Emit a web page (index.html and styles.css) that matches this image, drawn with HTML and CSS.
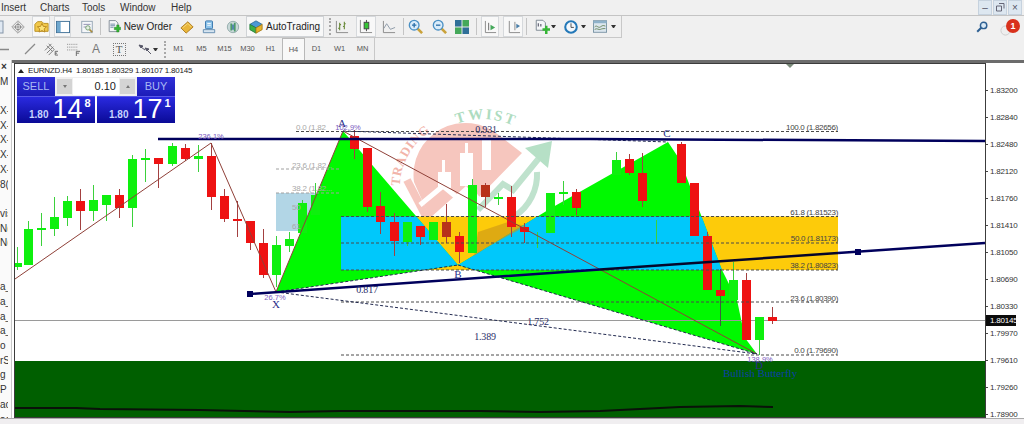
FILE: index.html
```html
<!DOCTYPE html>
<html lang="en">
<head>
<meta charset="utf-8">
<title>EURNZD.H4</title>
<link rel="stylesheet" href="styles.css">
</head>
<body>
<div class="app">
  <div class="menu">
    <span class="menu-item m-insert">Insert</span>
    <span class="menu-item m-charts">Charts</span>
    <span class="menu-item m-tools">Tools</span>
    <span class="menu-item m-window">Window</span>
    <span class="menu-item m-help">Help</span>
    <span class="win-btns">
      <span class="win-btn">–</span>
      <span class="win-btn">
        <svg width="9" height="9" viewBox="0 0 9 9"><path d="M3 .5h5v5M.5 3h5v5h-5z" fill="none" stroke="#667"/></svg>
      </span>
      <span class="win-btn close">×</span>
    </span>
  </div>

  <div class="toolbar">
    <div class="tools">
      <span class="tool w5"><svg width="5" height="16" viewBox="0 0 5 16"><rect x="-6" y="2" width="9" height="12" fill="#dfe8f2" stroke="#8495a8"/></svg></span>
      <span class="tool w25"><svg width="14" height="14" viewBox="0 0 18 18"><path d="M9 1l8 8-8 8-8-8z" fill="#eee" stroke="#8a8a8a"/><circle cx="9" cy="9" r="3.500" fill="#fff" stroke="#777"/><path d="M9 3v12M3 9h12" stroke="#777"/></svg></span>
      <span class="tool sel w18 ml2"><svg width="15" height="15" viewBox="0 0 17 17"><path d="M1 6l3-3h5l2 2h5v9H1z" fill="#f1c84a" stroke="#b58b1c"/><path d="M9 5l1.600 3.400 3.600.4-2.700 2.400.8 3.600L9 13l-3.300 1.800.8-3.600L3.800 8.800l3.600-.4z" fill="#fbe27a" stroke="#b5841c"/></svg></span>
      <span class="tool sel w17 ml4"><svg width="14" height="14" viewBox="0 0 15 15"><rect x=".5" y="1.500" width="14" height="12" fill="#fff" stroke="#3e6f96"/><rect x="1" y="2" width="4" height="11" fill="#6fa8cf"/></svg></span>
      <span class="tool w22 ml5"><svg width="14" height="14" viewBox="0 0 16 16"><rect x="2" y="1.500" width="12" height="13" fill="#f5f7fa" stroke="#8ea0b0"/><path d="M4 5h8M4 8h4" stroke="#88a"/><circle cx="9" cy="9" r="2.500" fill="#e6f0e0" stroke="#6c9a6c"/><path d="M11 11l3 3" stroke="#a88a3c" stroke-width="2"/></svg></span>
      <span class="sep ml2"></span>
      <span class="tool order ml7"><svg width="13" height="15" viewBox="0 0 16 18"><path d="M1.500 1.500h8l3 3v11h-11z" fill="#f4f6f8" stroke="#6d7a86"/><path d="M3 6h6M3 8h6M3 10h4" stroke="#5a7a9a"/><path d="M8 10h3V7h3v3h2v3h-2v3h-3v-3H8z" fill="#35b535" stroke="#1b7a1b" stroke-width=".5"/></svg><span class="tool-text">New Order</span></span>
      <span class="tool w22 ml4"><svg width="14" height="14" viewBox="0 0 16 16"><path d="M1 9l8-7 6 6-8 7z" fill="#e8b53a" stroke="#a9761a"/><path d="M3 9l6-5 4 4" fill="none" stroke="#f8dd80"/></svg></span>
      <span class="tool w21"><svg width="14" height="14" viewBox="0 0 16 16"><rect x="4" y="1" width="8" height="9" rx="1" fill="#8ec4ea" stroke="#2f6fa8"/><path d="M6 4h4M6 6h4" stroke="#fff"/><path d="M1.500 11h13v3.500h-13z" fill="#d6e4f0" stroke="#5c88ad"/></svg></span>
      <span class="tool w22 ml3"><svg width="14" height="14" viewBox="0 0 16 16"><circle cx="8" cy="8" r="6.500" fill="#c8d8d8" stroke="#8fa8a8"/><path d="M6 4v8M10 3v10" stroke="#4c9a6a" stroke-width="2"/><path d="M8 5v6" stroke="#4a7ea8" stroke-width="2"/></svg></span>
      <span class="auto ml2"><svg width="14" height="14" viewBox="0 0 16 16"><path d="M1 5l7-4 7 4-7 4z" fill="#4c98d6" stroke="#286a9c"/><path d="M1 5v6l7 4V9z" fill="#3bb04a" stroke="#27803a"/><path d="M15 5v6l-7 4V9z" fill="#e7b42c" stroke="#a87c18"/></svg><span class="tool-text">AutoTrading</span></span>
      <span class="grip ml5"></span>
      <span class="tool w18 ml2"><svg width="14" height="14" viewBox="0 0 15 15"><path d="M1.500 1v12.500H14" fill="none" stroke="#888"/><path d="M5 3v8M3.500 9H5M5 5h1.500M10 2v8M8.500 7H10M10 4h1.500" fill="none" stroke="#6a8a3a" stroke-width="1.200"/></svg></span>
      <span class="tool sel w20 ml5"><svg width="14" height="15" viewBox="0 0 15 16"><path d="M1.500 1v13.500H14" fill="none" stroke="#888"/><path d="M8 1v12" stroke="#444"/><rect x="5.500" y="3.500" width="5" height="7" fill="#35c535" stroke="#444"/></svg></span>
      <span class="tool w20 ml3"><svg width="14" height="14" viewBox="0 0 15 15"><path d="M1.500 1v12.500H14" fill="none" stroke="#888"/><path d="M2 9l3-5 4 6 5-2" fill="none" stroke="#8a98a6"/></svg></span>
      <span class="sep ml4"></span>
      <span class="tool w20 ml1"><svg width="15" height="15" viewBox="0 0 17 17"><path d="M10 10l6 6" stroke="#caa23a" stroke-width="3"/><circle cx="7" cy="7" r="5.500" fill="#d9ecfa" stroke="#4a90c4" stroke-width="1.500"/><path d="M4.500 7h5M7 4.500v5" stroke="#2a6fa8" stroke-width="1.500"/></svg></span>
      <span class="tool w20 ml4"><svg width="15" height="15" viewBox="0 0 17 17"><path d="M10 10l6 6" stroke="#caa23a" stroke-width="3"/><circle cx="7" cy="7" r="5.500" fill="#d9ecfa" stroke="#4a90c4" stroke-width="1.500"/><path d="M4.500 7h5" stroke="#2a6fa8" stroke-width="1.500"/></svg></span>
      <span class="tool w20 ml3"><svg width="14" height="14" viewBox="0 0 15 15"><rect x="0" y="0" width="7" height="7" fill="#2f6f98"/><rect x="8" y="0" width="7" height="7" fill="#45a85a"/><rect x="0" y="8" width="7" height="7" fill="#45a85a"/><rect x="8" y="8" width="7" height="7" fill="#2f6f98"/></svg></span>
      <span class="sep ml4"></span>
      <span class="tool sel w18 ml4"><svg width="13" height="14" viewBox="0 0 14 15"><path d="M1.500 1v12.500H13" fill="none" stroke="#888"/><path d="M5 3v8" stroke="#666"/><path d="M7 5l5 3-5 3z" fill="#45a85a"/></svg></span>
      <span class="tool sel w20 ml4"><svg width="15" height="14" viewBox="0 0 16 15"><path d="M3.500 1v12.500H15M9.500 2v9" fill="none" stroke="#888"/><path d="M11 4l4 2.500L11 9z" fill="#4a7ea8"/></svg></span>
      <span class="sep ml3"></span>
      <span class="tool w18 ml6"><svg width="15" height="15" viewBox="0 0 18 18"><path d="M1.500 1.500h8l3 3v9h-11z" fill="#f4f6f8" stroke="#6d7a86"/><path d="M4 9V5M7 9V6" stroke="#667" stroke-width="1.500"/><path d="M9 11h3V8h3v3h3v3h-3v4h-3v-4H9z" fill="#35b535"/></svg></span>
      <span class="caret"></span>
      <span class="tool w18 ml6"><svg width="14" height="14" viewBox="0 0 17 17"><circle cx="8.500" cy="8.500" r="7" fill="#f4f8fc" stroke="#2378b8" stroke-width="2.500"/><path d="M8.500 4v5H12" fill="none" stroke="#333"/></svg></span>
      <span class="caret ml1"></span>
      <span class="tool w18 ml5"><svg width="14" height="13" viewBox="0 0 17 15"><rect x=".5" y=".5" width="16" height="14" fill="#dbe6ee" stroke="#6d8a9c"/><rect x=".5" y=".5" width="16" height="3" fill="#8fb2ca"/><path d="M2 8c3-3 4 2 7 0s3-2 6-1M2 11c3-2 5 1 7 0s4-1 6-1" fill="none" stroke="#5a7a4a"/></svg></span>
      <span class="caret ml2"></span>
    </div>
    <div class="tools-right">
      <svg width="12" height="12" viewBox="0 0 15 15"><circle cx="9.500" cy="5.500" r="4" fill="#d8e8f5" stroke="#2d5f92" stroke-width="1.800"/><path d="M6.500 8.500L1.500 13.500" stroke="#2d5f92" stroke-width="2.500"/></svg>
      <span class="alert"><svg class="bubble" width="11" height="11" viewBox="0 0 12 12"><circle cx="6" cy="6" r="5" fill="#eee" stroke="#ccc"/></svg><span class="badge">1</span></span>
    </div>
  </div>

  <div class="toolbar tb2">
    <div class="tools">
      <span class="tool w9"><svg width="9" height="3" viewBox="0 0 9 3"><path d="M0 1.500h9" stroke="#888" stroke-width="1.500"/></svg></span>
      <span class="tool w14 ml14"><svg width="12" height="12" viewBox="0 0 12 12"><path d="M1 11L11 1" stroke="#8a8a8a" stroke-width="1.200"/></svg></span>
      <span class="tool w16 ml6"><svg width="14" height="14" viewBox="0 0 15 15"><path d="M1 9l7-7M3 12l7-7M5 14l6-6M3 4l6 6M5 2l6 6" stroke="#777"/><path d="M12 10h3M12 12h2M12 14h3M12 10v4" stroke="#666"/></svg></span>
      <span class="tool w16 ml7"><svg width="14" height="14" viewBox="0 0 15 15"><path d="M0 2.500h12M0 5.500h12M0 8.500h12" stroke="#888" stroke-dasharray="1 1"/><path d="M10 10h4M10 10v5M10 12h3" stroke="#666"/></svg></span>
      <span class="tool w14 ml7 glyph-a">A</span>
      <span class="tool w16 ml8"><span class="glyph-t">T</span></span>
      <span class="tool w16 ml10"><svg width="14" height="12" viewBox="0 0 14 12"><path d="M1 2l4 1-2 2zM7 5l4 1-2 2zM3 4l4 3M10 8l3 3" fill="#556" stroke="#556"/></svg></span>
      <span class="caret"></span>
      <span class="grip ml6"></span>
      <span class="periods">
        <span class="period">M1</span><span class="period">M5</span><span class="period">M15</span><span class="period">M30</span><span class="period">H1</span><span class="period active">H4</span><span class="period">D1</span><span class="period">W1</span><span class="period">MN</span>
      </span>
    </div>
  </div>

  <div class="main">
    <div class="side">
      <div class="side-row close-x">×</div><div class="side-row">M</div><div class="side-row"></div>
      <div class="side-row">X-</div><div class="side-row">X-</div><div class="side-row">X-</div><div class="side-row">X-</div><div class="side-row">X-</div><div class="side-row">8(</div><div class="side-row"></div>
      <div class="side-row">vis</div><div class="side-row">N(</div><div class="side-row">N(</div><div class="side-row"></div><div class="side-row"></div>
      <div class="side-row">a_</div><div class="side-row">a_</div><div class="side-row">a_</div><div class="side-row">a_</div>
      <div class="side-row">o S</div><div class="side-row">rS</div><div class="side-row">g</div><div class="side-row">P</div><div class="side-row">ac</div><div class="side-row">ac</div>
    </div>
    <div class="chart">
      <svg class="plot" width="970" height="353" viewBox="15 64 970 353">
        <defs>
          <clipPath id="zone"><rect x="341" y="216.500" width="497" height="53.500"/></clipPath>
          <path id="arc-red" d="M400 186A66 66 0 0 1 456 122"/>
          <path id="arc-green" d="M457 124C475 117 497 117 518 128"/>
        </defs>

        <g class="mark">
          <path class="mark-red-line" d="M407 180L430 224"/>
          <path class="mark-red" d="M414 182A52 52 0 0 1 500 136L522 153 478 198 466 186 430 218z"/>
          <path class="mark-cut" d="M442 160h3v12h6v16h-13v-16h4zM465 143h3v10h5v33h-13v-33h5zM482 140h9v30h-9z"/>
          <path class="mark-cut-line" d="M420 205L443 186 466 205 478 195"/>
          <path class="mark-green-line" d="M537 172A50 50 0 0 1 515 216"/>
          <path class="mark-green-line arrow" d="M478 210L503 184 513 190 544 152"/>
          <path class="mark-green" d="M552 141L548 168 525 148z"/>
          <text class="mark-text-red"><textPath href="#arc-red">TRADING</textPath></text>
          <text class="mark-text-green"><textPath href="#arc-green">TWIST</textPath></text>
        </g>

        <rect class="zone-old" x="276" y="193" width="65" height="38"/>
        <rect class="zone" x="341" y="216.500" width="497" height="53.500"/>

        <path class="wing" d="M276 292L343 131 458 265zM458 265L553 207 668 142 680 160 722 270 737 300 745 338 757 354z"/>
        <path class="wing-x" clip-path="url(#zone)" d="M276 292L343 131 458 265zM458 265L553 207 668 142 680 160 722 270 737 300 745 338 757 354z"/>
        <path class="zone-tint" d="M478 232l30-10 18 4-40 22-12 8z"/>

        <path class="band" d="M14 361h971v56H14z"/>
        <path class="curve" d="M15 408l61 0 24 1 100 1 44 1 46 1 50-1 140 0 60 1 60-1 80-4 60-1 33 1"/>
        <path class="price" d="M15 320.500h970"/>

        <path class="wick-g" d="M17.500 247v23M28.500 221v44M41.500 213v33M54.500 197v39M67.500 196v30M93.500 185v36M106.500 195v26M132.500 155v72M145.500 149v33M172.500 143v23M198.500 145v27M276.500 236v51M289.500 232v20M302.500 200v20M315.500 183v20M407.500 222v24M472.500 179v74M498.500 193v12M537.500 232v16M563.500 181v24M616.500 152v23M656.500 220v24M733.500 262v38M759.500 317v38"/>
        <path class="body-g" d="M15 263h7v4h-7zM24 229h9v36h-9zM37 228h9v2h-9zM50 217h9v12h-9zM63 201h9v17h-9zM89 200h9v11h-9zM102 195h9v10h-9zM128 159h9v49h-9zM141 158h9v2h-9zM168 146h9v18h-9zM194 156h9v3h-9zM272 245h9v30h-9zM285 239h9v7h-9zM298 203h9v30h-9zM311 195h9v20h-9zM403 222h9v20h-9zM429 222h9v18h-9zM468 185h9v68h-9zM494 197h9v2h-9zM546 193h9v40h-9zM559 192h9v2h-9zM612 160h9v15h-9zM729 280h9v20h-9zM755 317h9v23h-9z"/>
        <path class="wick-r" d="M80.500 189v41M119.500 189v29M158.500 158v30M185.500 144v17M211.500 143v67M224.500 189v33M237.500 201v36M250.500 221v29M263.500 229v49M354.500 130v29M367.500 148v64M380.500 192v42M394.500 213v43M420.500 226v19M446.500 204v39M459.500 232v31M485.500 183v24M511.500 186v51M524.500 223v20M576.500 189v26M629.500 154v21M642.500 153v54M681.500 142v41M694.500 183v53M707.500 232v58M746.500 273v67M772.500 307v17"/>
        <path class="wick-dark" d="M720.500 269v57"/>
        <path class="body-r" d="M76 201h9v10h-9zM115 195h9v13h-9zM154 158h9v6h-9zM181 148h9v11h-9zM207 156h9v41h-9zM220 196h9v23h-9zM233 219h9v2h-9zM246 221h9v22h-9zM259 243h9v32h-9zM350 136h9v13h-9zM363 148h9v59h-9zM376 206h9v16h-9zM390 222h9v19h-9zM416 226h9v11h-9zM455 236h9v16h-9zM507 197h9v30h-9zM520 227h9v5h-9zM572 192h9v16h-9zM625 159h9v14h-9zM638 173h9v28h-9zM677 144h9v39h-9zM690 183h9v53h-9zM703 236h9v54h-9zM716 290h9v6h-9zM742 280h9v60h-9zM768 317h9v4h-9z"/>
        <path class="body-dr" d="M442 222h9v15h-9zM481 185h9v12h-9z"/>

        <path class="zig" d="M15 279L211 143 276 292 343 131 757 354"/>
        <path class="fib" d="M296 131.500h542M341 216.500h497M341 243h497M341 270h497M341 302h497M341 355h497"/>
        <path class="fib-faint" d="M276 169h65M276 193h65"/>
        <path class="pat" d="M343 131L668 142M276 292L458 265M458 265L757 354M276 292L757 354"/>
        <path class="trend" d="M158 139L590 139 985 141M250 294L600 269.500"/>
        <path class="trend-dark" d="M600 269.500L838 253"/>
        <path class="trend" d="M838 253L985 243"/>
        <rect class="handle" x="247" y="291" width="6" height="6"/>
        <rect class="handle" x="855" y="249" width="6" height="6"/>
        <path class="marker" d="M786 64h8l-4 4z"/>

        <g class="fib-labels">
          <text x="838" y="130">100.0 (1.82656)</text>
          <text x="838" y="215">61.8 (1.81523)</text>
          <text x="838" y="241">50.0 (1.81173)</text>
          <text x="838" y="268">38.2 (1.80823)</text>
          <text x="838" y="301">23.6 (1.80390)</text>
          <text x="838" y="353">0.0 (1.79690)</text>
        </g>
        <g class="faint-labels">
          <text x="296" y="130">0.0 (1.82</text>
          <text x="292" y="168">23.6 (1.82...</text>
          <text x="292" y="191">38.2 (1.82...</text>
          <text x="292" y="210">50</text>
          <text x="292" y="229">61</text>
        </g>
        <g class="pct">
          <text x="211" y="139">236.1%</text>
          <text x="348" y="130">102.9%</text>
          <text x="275" y="300">26.7%</text>
          <text x="760" y="362">138.9%</text>
        </g>
        <g class="ratio">
          <text x="486" y="133">0.931</text>
          <text x="367" y="293">0.817</text>
          <text x="538" y="325">1.752</text>
          <text x="485" y="340">1.389</text>
        </g>
        <g class="point">
          <text x="276" y="308">X</text>
          <text x="342" y="127">A</text>
          <text x="458" y="278">B</text>
          <text x="667" y="137">C</text>
          <text x="759" y="369">D</text>
        </g>
        <text class="pattern-name" x="760" y="377">Bullish Butterfly</text>
      </svg>

      <div class="chart-title"><span class="tri"></span>EURNZD.H4&nbsp; 1.80185 1.80329 1.80107 1.80145</div>

      <div class="trade">
        <div class="trade-top">
          <div class="trade-label">SELL</div>
          <div class="lot">
            <span class="lot-btn"><span class="arr-d"></span></span>
            <span class="lot-val">0.10</span>
            <span class="lot-btn"><span class="arr-u"></span></span>
          </div>
          <div class="trade-label">BUY</div>
        </div>
        <div class="trade-bottom">
          <div class="quote"><span class="q-small">1.80</span><span class="q-big">14</span><span class="q-sup">8</span></div>
          <div class="quote"><span class="q-small">1.80</span><span class="q-big">17</span><span class="q-sup">1</span></div>
        </div>
      </div>
    </div>
    <div class="axis">
      <div class="tick">1.83200</div><div class="tick">1.82840</div><div class="tick">1.82480</div><div class="tick">1.82120</div><div class="tick">1.81760</div><div class="tick">1.81410</div><div class="tick">1.81050</div><div class="tick">1.80690</div><div class="tick">1.80330</div><div class="tick">1.79970</div><div class="tick">1.79610</div><div class="tick">1.79260</div><div class="tick">1.78900</div>
      <div class="tag">1.80145</div>
    </div>
  </div>
  <div class="status"></div>
</div>
</body>
</html>
```
FILE: styles.css
```css
* { box-sizing: border-box; }
html, body { margin: 0; padding: 0; background: #f0f0f0; }
body { font-family: "Liberation Sans", sans-serif; color: #222; }
svg { display: block; }

.app { width: 1024px; height: 424px; overflow: hidden; display: flex; flex-direction: column; background: #f0f0f0; }

/* menu */
.menu { height: 16px; flex: none; display: flex; align-items: center; font-size: 10px; color: #333; border-bottom: 1px solid #c4c4c4; }
.menu-item { display: block; }
.m-insert { width: 40px; padding-left: 1px; }
.m-charts { width: 42px; }
.m-tools { width: 38px; }
.m-window { width: 51px; }
.win-btns { margin-left: auto; margin-right: 2px; height: 15px; display: flex; gap: 1px; }
.win-btn { width: 14px; height: 15px; background: #dde7f0; border: 1px solid #c6d2de; color: #556; font-size: 10px; line-height: 13px; display: flex; align-items: center; justify-content: center; }

/* toolbars */
.toolbar { height: 22px; flex: none; display: flex; align-items: center; justify-content: space-between; }
.tools { display: flex; align-items: center; height: 22px; width: 622px; border-right: 1px solid #c8c8c8; border-bottom: 1px solid #c8c8c8; }
.tb2 .tools { width: 375px; border-bottom: 0; }
.tool { display: flex; align-items: center; justify-content: center; height: 21px; flex: none; }
.sel { background: #f8f8f8; border: 1px solid #d6d9dc; }
.order { justify-content: flex-start; width: 64px; gap: 3px; }
.tool-text { font-size: 10px; color: #222; white-space: nowrap; }
.auto { width: 78px; height: 21px; flex: none; display: flex; align-items: center; gap: 3px; padding-left: 2px; background: #f8f8f8; border: 1px solid #d0d3d6; }
.sep { width: 1px; height: 17px; flex: none; background: #c4c4c4; }
.grip { width: 2px; height: 17px; flex: none; border-left: 2px dotted #a8a8a8; }
.caret { width: 5px; height: 3px; flex: none; border-left: 2.500px solid transparent; border-right: 2.500px solid transparent; border-top: 3px solid #333; }
.tools-right { display: flex; align-items: center; gap: 12px; padding-right: 4px; }
.alert { display: block; position: relative; width: 20px; height: 18px; }
.bubble { position: absolute; left: 0; bottom: 0; }
.badge { position: absolute; right: 0; top: 1px; width: 14px; height: 14px; border-radius: 50%; background: #d8311c; color: #fff; font-size: 9px; font-weight: 700; line-height: 14px; text-align: center; }

.w5 { width: 5px; } .w9 { width: 9px; } .w14 { width: 14px; } .w16 { width: 16px; } .w17 { width: 17px; } .w18 { width: 18px; } .w20 { width: 20px; } .w21 { width: 21px; } .w22 { width: 22px; } .w25 { width: 25px; }
.ml1 { margin-left: 1px; } .ml2 { margin-left: 2px; } .ml3 { margin-left: 3px; } .ml4 { margin-left: 4px; } .ml5 { margin-left: 5px; } .ml6 { margin-left: 6px; } .ml7 { margin-left: 7px; } .ml8 { margin-left: 8px; } .ml10 { margin-left: 10px; } .ml14 { margin-left: 14px; }

.glyph-a { font-size: 12px; color: #777; }
.glyph-t { display: block; width: 13px; height: 13px; border: 1px dotted #777; font-family: "Liberation Serif", serif; font-size: 11px; line-height: 11px; text-align: center; color: #555; }

.periods { display: flex; margin-left: 1px; height: 22px; align-items: stretch; }
.period { width: 23px; font-size: 7.500px; line-height: 22px; text-align: center; color: #555; }
.period.active { background: #f8f8f8; border: 1px solid #b8b8b8; border-bottom: 0; }

/* main */
.main { height: 358px; flex: none; display: flex; border-top: 3px solid #6c6c6c; background: #fff; overflow: visible; }
.side { width: 12px; height: 364px; flex: none; margin-top: -3px; background: #fafafa; overflow: hidden; font-size: 10px; color: #333; border-right: 1px solid #c8c8c8; }
.side-row { width: 8px; height: 14.700px; line-height: 14.700px; white-space: nowrap; overflow: hidden; }
.close-x { font-weight: 700; padding-left: 1px; }

.chart { position: relative; width: 972px; flex: none; height: 355px; border: 1px solid #3c3c3c; background: #fff; margin-left: 2px; }
.plot { overflow: hidden; }

/* chart drawing */
.zone-old { fill: #b2d6e6; }
.zone { fill: #fdcb0a; }
.wing { fill: #00f900; }
.wing-x { fill: #00c8fb; }
.zone-tint { fill: #c99418; opacity: .6; }
.band { fill: #005f00; }
.curve { fill: none; stroke: #0a120a; stroke-width: 2; }
.price { stroke: #9a9a9a; stroke-width: 1; }
.wick-g { stroke: #3bd13b; stroke-width: 1; fill: none; }
.body-g { fill: #0ef00e; }
.wick-r { stroke: #a34040; stroke-width: 1; fill: none; }
.wick-dark { stroke: #3f5f3f; stroke-width: 1; }
.body-r { fill: #ee1212; }
.body-dr { fill: #b8321a; }
.zig { fill: none; stroke: #8f4038; stroke-width: 1; }
.fib { stroke: #4a4a4a; stroke-width: 1; stroke-dasharray: 3 2; fill: none; }
.fib-faint { stroke: #a0a0a0; stroke-width: 1; stroke-dasharray: 3 2; }
.pat { stroke: #222a50; stroke-width: 1; stroke-dasharray: 3 2; fill: none; }
.trend { stroke: #00005c; stroke-width: 2.500; fill: none; }
.trend-dark { stroke: #05052a; stroke-width: 2.500; fill: none; }
.handle { fill: #00005c; }
.marker { fill: #7a8a7a; }

.fib-labels text { font-size: 8px; letter-spacing: -.3px; fill: #444; text-anchor: end; }
.faint-labels text { font-size: 8px; letter-spacing: -.2px; fill: #a8a8a8; }
.pct text { font-size: 7.500px; fill: #7a5ac0; text-anchor: middle; }
.ratio text { font-family: "Liberation Serif", serif; font-size: 10px; letter-spacing: -.2px; fill: #2a2f6a; text-anchor: middle; }
.point text { font-family: "Liberation Serif", serif; font-size: 11px; fill: #2a2f8a; text-anchor: middle; }
.pattern-name { font-family: "Liberation Serif", serif; font-size: 11px; fill: #0b3fa8; text-anchor: middle; }

.mark-red { fill: #f6c6be; }
.mark-cut { fill: #fff; }
.mark-cut-line { fill: none; stroke: #fff; stroke-width: 5; }
.mark-green { fill: #b6e0c6; }
.mark-red-line { fill: none; stroke: #f6c6be; stroke-width: 8; }
.mark-green-line { fill: none; stroke: #bfe2cd; stroke-width: 6; }
.mark-text-red { font-family: "Liberation Serif", serif; font-size: 13px; font-weight: 700; fill: #f2b4aa; letter-spacing: .5px; }
.mark-text-green { font-family: "Liberation Serif", serif; font-size: 15px; font-weight: 700; fill: #aedcc0; letter-spacing: 2px; }

/* overlays */
.chart-title { position: absolute; left: 3px; top: 1px; display: flex; align-items: center; gap: 4px; font-size: 8px; letter-spacing: -.2px; line-height: 11px; color: #222; white-space: nowrap; }
.tri { width: 0; height: 0; border-left: 3.500px solid transparent; border-right: 3.500px solid transparent; border-bottom: 4px solid #222; }

.trade { position: absolute; left: 2px; top: 13px; width: 158px; color: #fff; }
.trade-top { display: flex; height: 19px; }
.trade-label { width: 38px; flex: none; background: linear-gradient(#3030d8, #1c1cb8); color: #a8b8f4; font-size: 11px; line-height: 19px; text-align: center; }
.lot { flex: 1; display: flex; align-items: center; gap: 1px; background: #f0f0f0; padding: 1px 2px; }
.lot-btn { width: 15px; height: 15px; flex: none; display: flex; align-items: center; justify-content: center; background: #d4d4d4; }
.lot-val { flex: 1; height: 17px; background: #fff; color: #222; font-size: 11px; line-height: 17px; text-align: right; padding-right: 3px; }
.arr-d { border-left: 2.500px solid transparent; border-right: 2.500px solid transparent; border-top: 3px solid #777; }
.arr-u { border-left: 2.500px solid transparent; border-right: 2.500px solid transparent; border-bottom: 3px solid #777; }
.trade-bottom { display: flex; gap: 2px; height: 27px; }
.quote { width: 78px; position: relative; padding-left: 12px; display: flex; align-items: flex-end; background: linear-gradient(#2a2ae0, #0a0a96); border-top: 1px solid #5a5ae8; }
.q-small { font-size: 10px; font-weight: 700; line-height: 17px; color: #c8d4ff; margin-right: 4px; }
.q-big { font-size: 27px; line-height: 28px; }
.q-sup { font-size: 11px; font-weight: 700; align-self: flex-start; line-height: 12px; margin-left: 2px; }

.axis { position: relative; width: 38px; flex: none; padding-top: 14px; background: #fff; font-size: 8px; letter-spacing: -.2px; color: #333; }
.tick { position: relative; height: 27px; line-height: 27px; padding-left: 4px; white-space: nowrap; }
.tick::before { content: ""; position: absolute; left: 0; top: 13px; width: 2px; height: 1px; background: #444; }
.tag { position: absolute; left: 0; right: 8px; top: 252px; height: 11px; line-height: 11px; padding-left: 4px; background: #0c0c0c; color: #fff; }

.status { flex: 1; background: #f0eef0; border-top: 1px solid #aaa; }
```
